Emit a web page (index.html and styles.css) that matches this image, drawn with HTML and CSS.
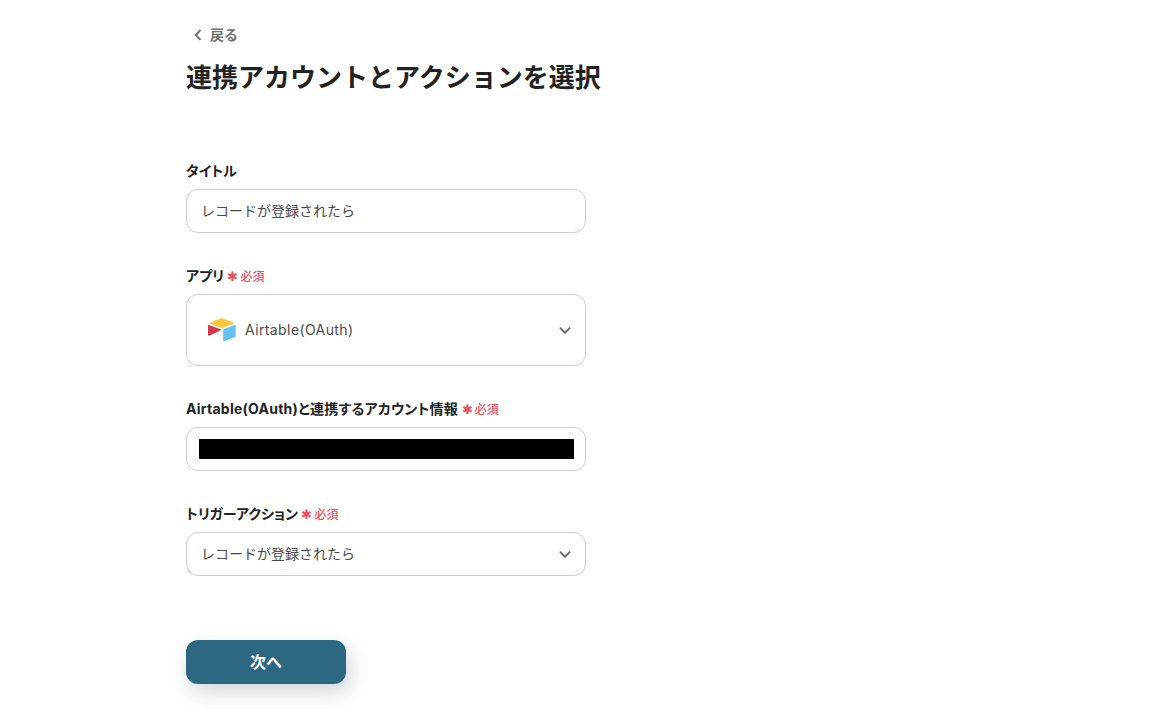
FILE: index.html
```html
<!DOCTYPE html>
<html lang="ja">
<head>
    <meta charset="UTF-8">
    <meta name="viewport" content="width=device-width, initial-scale=1.0">
    <title>連携アカウントとアクションを選択</title>
    <link rel="stylesheet" href="styles.css">
</head>
<body>
    <div class="container">
        <a class="back" href="#">
            <svg class="back-icon" width="12" height="14" viewBox="0 0 12 14">
                <path d="M8.5 2.2 3.7 7l4.8 4.8" fill="none" stroke="#6c6c6c" stroke-width="1.9"/>
            </svg>
            戻る
        </a>
        <h1>連携アカウントとアクションを選択</h1>

        <form class="form">
            <div class="field">
                <div class="label label-kana">タイトル</div>
                <div class="input"><span class="input-text">レコードが登録されたら</span></div>
            </div>

            <div class="field">
                <div class="label label-kana">アプリ <span class="required"><span class="mark">✱</span> 必須</span></div>
                <div class="input input-app">
                    <svg class="app-icon" width="28" height="24" viewBox="0 0 28 24">
                        <path d="M12.6 0.5 2.2 4.6c-.5.2-.5.9 0 1.1l10.5 4.1c.8.3 1.7.3 2.5 0l10.5-4.1c.5-.2.5-.9 0-1.1L15.2.5c-.8-.3-1.8-.3-2.6 0z" fill="#fcc93c"/>
                        <path d="M15.2 11.9v10.7c0 .5.5.9 1 .7l11-4.4c.3-.1.5-.4.5-.7V7.5c0-.5-.5-.9-1-.7l-11 4.4c-.3.1-.5.4-.5.7z" fill="#66c0f0"/>
                        <path d="M12.6 12.3 9.3 13.9 1.2 17.8c-.5.2-1.2-.1-1.2-.7V7.6c0-.2.1-.4.3-.5.1-.1.2-.1.3-.1.1 0 .2 0 .3.1l11.7 4.1c.6.2.6 .9 0 1.1z" fill="#d5394f"/>
                    </svg>
                    <span class="input-text app-name">Airtable(OAuth)</span>
                    <svg class="chevron" width="14" height="14" viewBox="0 0 14 14">
                        <path d="M1.9 4.6 7 9.6l5.1-5" fill="none" stroke="#666" stroke-width="1.9"/>
                    </svg>
                </div>
            </div>

            <div class="field">
                <div class="label">Airtable(OAuth)と連携するアカウント情報 <span class="required"><span class="mark">✱</span> 必須</span></div>
                <div class="input input-account">
                    <div class="redacted"></div>
                </div>
            </div>

            <div class="field">
                <div class="label label-kana">トリガーアクション <span class="required"><span class="mark">✱</span> 必須</span></div>
                <div class="input">
                    <span class="input-text">レコードが登録されたら</span>
                    <svg class="chevron" width="14" height="14" viewBox="0 0 14 14">
                        <path d="M1.9 4.6 7 9.6l5.1-5" fill="none" stroke="#666" stroke-width="1.9"/>
                    </svg>
                </div>
            </div>

            <button class="next" type="button">次へ</button>
        </form>
    </div>
</body>
</html>
```

FILE: styles.css
```css
html, body {
    height: 100%;
}

body {
    margin: 0;
    background: #fff;
    color: #222;
    font-family: Inter, "Noto Sans CJK JP", sans-serif;
    overflow: hidden;
}

.container {
    width: 400px;
    margin-left: 186px;
    padding-top: 25px;
}

.back {
    display: flex;
    align-items: center;
    gap: 6px;
    height: 20px;
    padding-left: 6px;
    color: #707070;
    font-size: 14px;
    font-weight: 700;
    line-height: 20px;
    text-decoration: none;
}

h1 {
    margin: 12px 0 0;
    width: 440px;
    font-size: 26px;
    font-weight: 700;
    line-height: 42px;
    color: #222;
}

.form {
    margin-top: 62px;
}

.field {
    margin-bottom: 33px;
}

.label {
    height: 20px;
    margin-bottom: 8px;
    font-size: 14px;
    font-weight: 700;
    line-height: 20px;
    color: #222;
    white-space: nowrap;
    font-feature-settings: "palt";
    letter-spacing: 0.25px;
}

.label-kana {
    letter-spacing: 0;
}

.required {
    color: #e8505b;
    font-size: 12px;
    font-weight: 500;
    font-feature-settings: normal;
    letter-spacing: 0;
}

.mark {
    font-size: 13px;
    font-weight: 400;
    margin-right: -1px;
}

.input {
    box-sizing: border-box;
    display: flex;
    align-items: center;
    height: 44px;
    padding: 0 15px 0 14px;
    border: 1px solid #ccced2;
    border-radius: 12px;
    font-size: 14px;
    color: #4a4a4a;
    background: #fff;
}

.input-text {
    margin-bottom: 2px;
}

.input-app {
    height: 72px;
    padding-left: 21px;
}

.app-icon {
    flex: none;
    margin-right: 9px;
}

.app-name {
    letter-spacing: 0.4px;
}

.chevron {
    flex: none;
    margin-left: auto;
    margin-right: -2px;
}

.input-account {
    padding: 0 11px 0 12px;
}

.redacted {
    width: 100%;
    height: 20px;
    background: #000;
}

.next {
    display: block;
    width: 160px;
    height: 44px;
    margin-top: 64px;
    padding: 0 0 2px;
    border: none;
    border-radius: 12px;
    background: #2e6782;
    box-shadow: 4px 8px 20px rgba(46, 74, 96, 0.22);
    color: #fff;
    font-family: inherit;
    font-size: 16px;
    font-weight: 700;
}
```
